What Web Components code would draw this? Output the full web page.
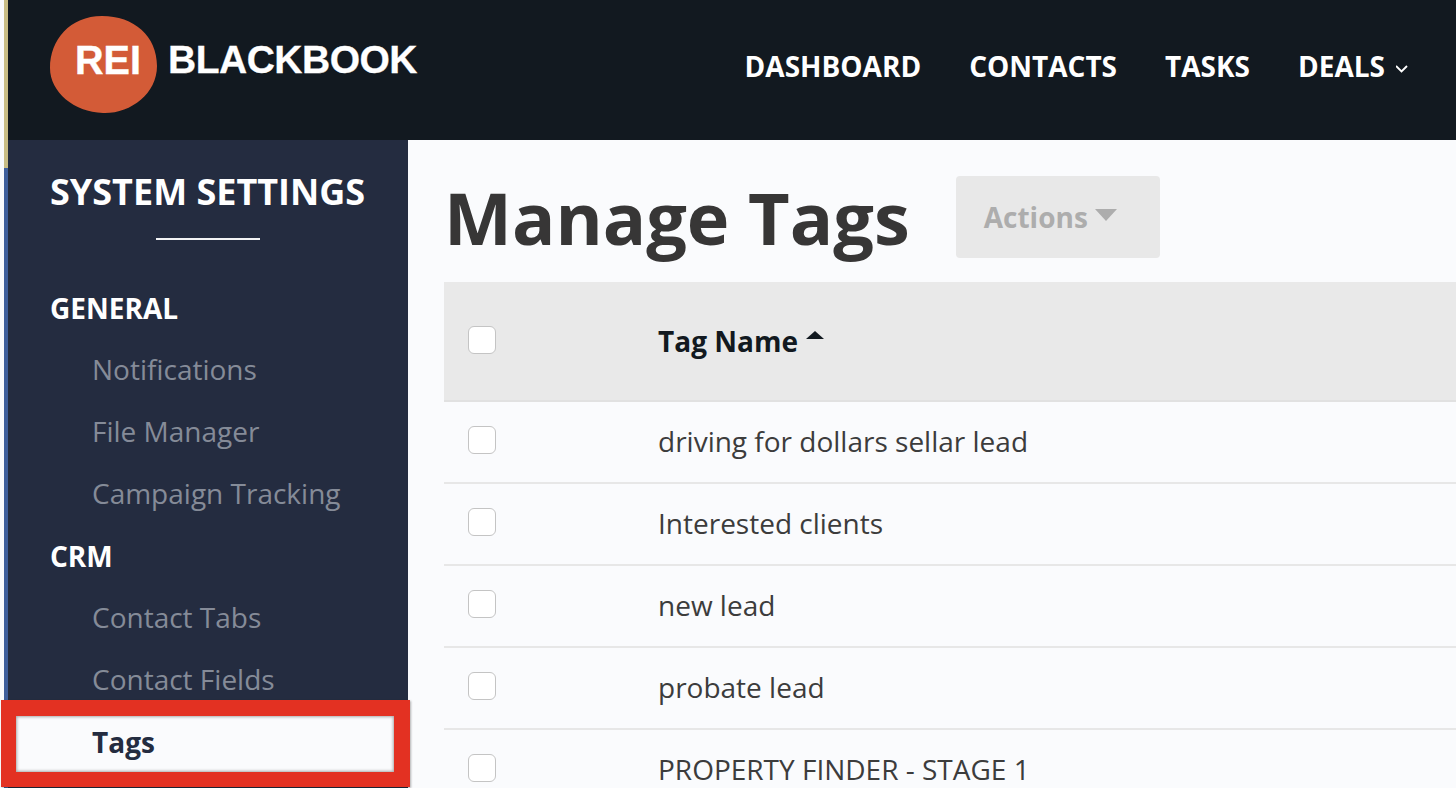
<!DOCTYPE html>
<html>
<head>
<meta charset="utf-8">
<title>Manage Tags</title>
<style>
  html, body { margin: 0; height: 100%; overflow: hidden; background: #fafbfd; }
  body { font-family: "Open Sans", sans-serif; }
</style>
</head>
<body>
<rei-app>
  <rei-topbar slot="top">
    <rei-nav-link>DASHBOARD</rei-nav-link>
    <rei-nav-link>CONTACTS</rei-nav-link>
    <rei-nav-link>TASKS</rei-nav-link>
    <rei-nav-link caret>DEALS</rei-nav-link>
  </rei-topbar>
  <rei-sidebar slot="side" heading="SYSTEM SETTINGS">
    <rei-side-group>GENERAL</rei-side-group>
    <rei-side-item>Notifications</rei-side-item>
    <rei-side-item>File Manager</rei-side-item>
    <rei-side-item>Campaign Tracking</rei-side-item>
    <rei-side-group>CRM</rei-side-group>
    <rei-side-item>Contact Tabs</rei-side-item>
    <rei-side-item>Contact Fields</rei-side-item>
    <rei-side-item active>Tags</rei-side-item>
  </rei-sidebar>
  <rei-tags-page>
    <rei-tag-row head>Tag Name</rei-tag-row>
    <rei-tag-row>driving for dollars sellar lead</rei-tag-row>
    <rei-tag-row>Interested clients</rei-tag-row>
    <rei-tag-row>new lead</rei-tag-row>
    <rei-tag-row>probate lead</rei-tag-row>
    <rei-tag-row>PROPERTY FINDER - STAGE 1</rei-tag-row>
  </rei-tags-page>
</rei-app>

<script>
"use strict";

(() => {
  customElements.define("rei-app", class extends HTMLElement {
    constructor() {
      super();
      this.attachShadow({mode: "open"}).innerHTML = `
      <style>
      :host {
        display: grid;
        grid-template-columns: 8px 400px 1fr;
        grid-template-rows: 140px 1fr;
        height: 788px;
        overflow: hidden;
      }
      #edge {
        grid-row: 1 / 3;
        border-left: 4px solid #fafbfd;
        background: linear-gradient(#c9bd85 0, #c9bd85 168px, #3f5f9c 168px);
      }
      #top { grid-column: 2 / 4; min-width: 0; }
      #main { min-width: 0; overflow: hidden; }
      </style>
      <div id="edge"></div>
      <div id="top"><slot name="top"></slot></div>
      <slot name="side"></slot>
      <div id="main"><slot></slot></div>
      `;
    }
  });

  customElements.define("rei-topbar", class extends HTMLElement {
    constructor() {
      super();
      this.attachShadow({mode: "open"}).innerHTML = `
      <style>
      :host {
        display: flex;
        align-items: flex-start;
        justify-content: space-between;
        height: 140px;
        background: #121920;
        padding: 16px 48px 0 42px;
        box-sizing: border-box;
      }
      #logo { display: flex; align-items: flex-start; }
      #logo svg { display: block; }
      #word {
        font: bold 39px/1 "Liberation Sans", sans-serif;
        color: #fff;
        margin: 24px 0 0 10px;
        letter-spacing: -.5px;
        -webkit-text-stroke: .3px #fff;
      }
      #links { display: flex; gap: 48px; margin-top: 33px; }
      </style>
      <div id="logo">
        <svg width="108" height="98" viewBox="0 0 108 98">
          <path d="M52 0C84 0 107 20 107 50C107 78 80 98 53 97C24 96 0 76 0 52C0 24 20 0 52 0Z" fill="#d35b37"/>
          <text x="25" y="58" font-family="Liberation Sans" font-weight="700" font-size="40" fill="#fff" stroke="#fff" stroke-width=".4" textLength="66" lengthAdjust="spacingAndGlyphs">REI</text>
        </svg>
        <div id="word">BLACKBOOK</div>
      </div>
      <div id="links"><slot></slot></div>
      `;
    }
  });

  customElements.define("rei-nav-link", class extends HTMLElement {
    constructor() {
      super();
      this.attachShadow({mode: "open"}).innerHTML = `
      <style>
      :host {
        display: inline-flex;
        align-items: center;
        color: #fff;
        font: 700 28px/34px "Open Sans", sans-serif;
        white-space: nowrap;
      }
      svg { display: none; margin: 6px 0 0 11px; }
      :host([caret]) svg { display: block; }
      </style>
      <slot></slot>
      <svg width="12" height="8" viewBox="0 0 12 8"><path d="M0 1L5.5 6.5L11 1" fill="none" stroke="#fff" stroke-width="1.9"/></svg>
      `;
    }
  });

  customElements.define("rei-sidebar", class extends HTMLElement {
    static get observedAttributes() {
      return ["heading"];
    }

    constructor() {
      super();
      this.attachShadow({mode: "open"}).innerHTML = `
      <style>
      :host {
        display: block;
        background: #242c40;
        padding: 28px 0 0 42px;
        box-sizing: border-box;
        min-height: 0;
      }
      h2 {
        margin: 0;
        color: #fff;
        font: 700 36px/48px "Open Sans", sans-serif;
        white-space: nowrap;
      }
      hr {
        width: 104px;
        height: 2px;
        margin: 22px 0 36px 106px;
        border: 0;
        background: #f2f3f5;
      }
      </style>
      <h2 id="heading"></h2>
      <hr>
      <slot></slot>
      `;
    }

    attributeChangedCallback(name, oldVal, newVal) {
      if (name === "heading") {
        this.shadowRoot.getElementById("heading").textContent = newVal;
      }
    }
  });

  customElements.define("rei-side-group", class extends HTMLElement {
    constructor() {
      super();
      this.attachShadow({mode: "open"}).innerHTML = `
      <style>
      :host {
        display: block;
        color: #fff;
        font: 700 28px/64px "Open Sans", sans-serif;
        height: 62px;
      }
      </style>
      <slot></slot>
      `;
    }
  });

  customElements.define("rei-side-item", class extends HTMLElement {
    constructor() {
      super();
      this.attachShadow({mode: "open"}).innerHTML = `
      <style>
      :host {
        display: block;
        position: relative;
        height: 62px;
        padding-left: 42px;
        color: #858b98;
        font: 400 28px/62px "Open Sans", sans-serif;
        white-space: nowrap;
      }
      :host([active]) {
        color: #242c40;
        font-weight: 700;
        line-height: 64px;
      }
      /* red callout drawn over the sidebar edge */
      #mark { display: none; }
      :host([active]) #mark {
        display: block;
        position: absolute;
        left: -49px;
        top: -10px;
        width: 409px;
        height: 87px;
        box-sizing: border-box;
        background: #fafbfd;
        border-style: solid;
        border-color: #e33122;
        border-width: 16px 16px 15px 15px;
        box-shadow: inset 0 0 3px 1px #a9a9a9, 1px 1px 2px rgba(0,0,0,.3);
      }
      #label { position: relative; }
      </style>
      <div id="mark"></div>
      <span id="label"><slot></slot></span>
      `;
    }
  });

  customElements.define("rei-tags-page", class extends HTMLElement {
    constructor() {
      super();
      this.attachShadow({mode: "open"}).innerHTML = `
      <style>
      :host {
        display: block;
        padding: 36px 0 0 36px;
        background: #fafbfd;
      }
      #title { display: flex; align-items: flex-start; height: 106px; }
      h1 {
        margin: 0;
        color: #373636;
        font: 700 72px/82px "Open Sans", sans-serif;
        white-space: nowrap;
      }
      #actions {
        display: flex;
        align-items: center;
        gap: 7px;
        width: 204px;
        height: 82px;
        margin-left: 46px;
        padding-left: 28px;
        box-sizing: border-box;
        border-radius: 4px;
        background: #e8e8e8;
        color: #adadad;
        font: 700 28px/34px "Open Sans", sans-serif;
      }
      #actions i {
        width: 0;
        height: 0;
        margin: 0 0 4px;
        border: 11px solid transparent;
        border-top: 12px solid #adadad;
        border-bottom: 0;
      }
      </style>
      <div id="title">
        <h1>Manage Tags</h1>
        <div id="actions">Actions<i></i></div>
      </div>
      <slot></slot>
      `;
    }
  });

  customElements.define("rei-tag-row", class extends HTMLElement {
    constructor() {
      super();
      this.attachShadow({mode: "open"}).innerHTML = `
      <style>
      :host {
        display: grid;
        grid-template-columns: 190px 1fr;
        align-items: center;
        height: 82px;
        padding-left: 24px;
        box-sizing: border-box;
        border-bottom: 2px solid #e7e7e7;
        color: #3c3c3c;
        font: 400 28px/36px "Open Sans", sans-serif;
        white-space: nowrap;
      }
      :host([head]) {
        height: 120px;
        background: #e9e9e9;
        border-bottom-color: #e1e1e1;
        color: #121920;
        font-weight: 700;
      }
      #box {
        width: 28px;
        height: 28px;
        margin-bottom: 4px;
        box-sizing: border-box;
        border: 1px solid #c4c4c4;
        border-radius: 6px;
        background: #fff;
      }
      :host([head]) #box { margin-bottom: 2px; }
      #name { display: flex; align-items: center; gap: 8px; margin-bottom: 2px; }
      :host([head]) #name { margin-bottom: 0; }
      i { display: none; }
      :host([head]) i {
        display: block;
        width: 0;
        height: 0;
        margin-bottom: 12px;
        border: 9px solid transparent;
        border-bottom: 8px solid #121920;
        border-top: 0;
      }
      </style>
      <div id="box"></div>
      <div id="name"><slot></slot><i></i></div>
      `;
    }
  });
})();
</script>
</body>
</html>
